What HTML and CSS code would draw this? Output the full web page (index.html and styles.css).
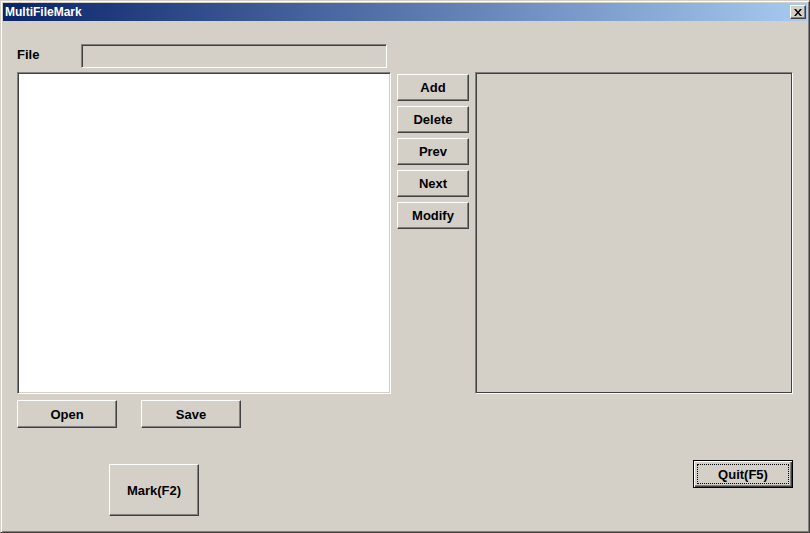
FILE: index.html
```html
<!DOCTYPE html>
<html lang="en">
<head>
<meta charset="UTF-8">
<title>MultiFileMark</title>
<link rel="stylesheet" href="styles.css">
</head>
<body>

<div class="window">
    <div class="titlebar">
        <span class="title">MultiFileMark</span>
        <button class="close-btn" title="Close">
            <svg width="8" height="7" viewBox="0 0 8 7"><path d="M0 0h2l2 2.5L6 0h2L5 3.5 8 7H6L4 4.5 2 7H0l3-3.5z" fill="#000"/></svg>
        </button>
    </div>
    <div class="client">
        <div class="file-row">
            <span class="label">File</span>
            <div class="field"></div>
        </div>
        <div class="main-row">
            <div class="listbox"></div>
            <div class="side-buttons">
                <button class="btn">Add</button>
                <button class="btn">Delete</button>
                <button class="btn">Prev</button>
                <button class="btn">Next</button>
                <button class="btn">Modify</button>
            </div>
            <div class="panel"></div>
        </div>
        <div class="file-buttons">
            <button class="btn wide">Open</button>
            <button class="btn wide">Save</button>
        </div>
        <div class="bottom-row">
            <button class="btn mark">Mark(F2)</button>
            <button class="btn wide default"><span class="focus">Quit(F5)</span></button>
        </div>
    </div>
</div>

</body>
</html>
```

FILE: styles.css
```css
body {
    margin: 0;
    background: #d4d0c8;
    font-family: "Liberation Sans", Arial, sans-serif;
}

.window {
    width: 810px;
    height: 533px;
    box-sizing: border-box;
    padding: 1px;
    background: #d4d0c8;
    border: 1px solid;
    border-color: #d4d0c8 #404040 #404040 #d4d0c8;
    box-shadow: inset 1px 1px #fff, inset -1px -1px #808080;
    display: flex;
    flex-direction: column;
}

.titlebar {
    height: 18px;
    margin: 1px;
    display: flex;
    align-items: center;
    justify-content: space-between;
    padding: 0 1px 0 2px;
    background: linear-gradient(to right, #0a246a, #a6caf0);
}

.title {
    color: #fff;
    font-weight: bold;
    font-size: 12px;
}

.close-btn {
    width: 16px;
    height: 14px;
    padding: 0;
    background: #d4d0c8;
    border: 1px solid;
    border-color: #fff #404040 #404040 #fff;
    box-shadow: inset -1px -1px #808080;
    display: flex;
    align-items: center;
    justify-content: center;
}

.client {
    flex: 1;
    padding: 22px 15px 0 15px;
    display: flex;
    flex-direction: column;
}

.file-row {
    display: flex;
    align-items: center;
    height: 24px;
}

.label {
    width: 64px;
    font-size: 13px;
    font-weight: bold;
    margin-top: -4px;
}

.field {
    width: 306px;
    height: 24px;
    box-sizing: border-box;
    border: 1px solid;
    border-color: #808080 #fff #fff #808080;
    box-shadow: inset 1px 1px #404040, inset -1px -1px #d4d0c8;
}

.main-row {
    display: flex;
    gap: 6px;
    margin-top: 4px;
}

.listbox {
    width: 374px;
    height: 322px;
    box-sizing: border-box;
    background: #fff;
    border: 1px solid;
    border-color: #808080 #fff #fff #808080;
    box-shadow: inset 1px 1px #404040, inset -1px -1px #d4d0c8;
}

.side-buttons {
    display: flex;
    flex-direction: column;
    gap: 5px;
    margin-top: 2px;
}

.panel {
    width: 318px;
    height: 322px;
    box-sizing: border-box;
    border: 1px solid;
    border-color: #808080 #fff #fff #808080;
    box-shadow: inset 0 0 0 1px #404040;
}

.btn {
    width: 72px;
    height: 27px;
    padding: 0;
    font-family: "Liberation Sans", Arial, sans-serif;
    font-size: 13px;
    font-weight: bold;
    color: #000;
    background: #d4d0c8;
    border: 1px solid;
    border-color: #fff #404040 #404040 #fff;
    box-shadow: inset -1px -1px #808080, inset 1px 1px #d4d0c8;
}

.btn.wide {
    width: 100px;
    height: 28px;
}

.file-buttons {
    display: flex;
    gap: 24px;
    margin-top: 6px;
}

.bottom-row {
    display: flex;
    justify-content: space-between;
    align-items: flex-start;
    margin-top: 32px;
}

.btn.mark {
    width: 90px;
    height: 52px;
    margin-left: 92px;
    margin-top: 4px;
}

.btn.default {
    border: 1px solid #000;
    box-shadow: inset 1px 1px #fff, inset -1px -1px #404040, inset -2px -2px #808080;
    display: flex;
    align-items: center;
    justify-content: center;
    padding: 3px;
}

.focus {
    flex: 1;
    align-self: stretch;
    display: flex;
    align-items: center;
    justify-content: center;
    border: 1px dotted #000;
}
```
